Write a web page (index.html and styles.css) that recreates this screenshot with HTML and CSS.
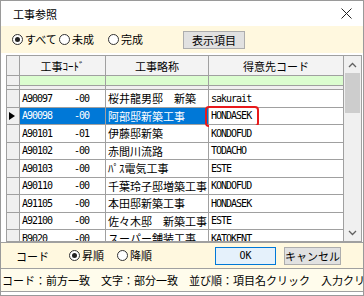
FILE: index.html
```html
<!DOCTYPE html>
<html lang="ja">
<head>
    <meta charset="UTF-8">
    <title>工事参照</title>
    <link rel="stylesheet" href="styles.css">
</head>
<body>

<div class="window">
    <div class="titlebar">
        <span class="title">工事参照</span>
        <svg class="close" width="11" height="11" viewBox="0 0 11 11">
            <path d="M0.5 0.5L10.5 10.5M10.5 0.5L0.5 10.5" stroke="#222" stroke-width="1"/>
        </svg>
    </div>

    <div class="toolbar">
        <span class="radio r-all"><span class="dot on"></span>すべて</span>
        <span class="radio r-mi"><span class="dot"></span>未成</span>
        <span class="radio r-kan"><span class="dot"></span>完成</span>
        <span class="btn btn-cols">表示項目</span>
    </div>

    <div class="grid-area">
        <div class="grid">
            <div class="row head">
                <div class="rh"></div>
                <div class="c">工事ｺｰﾄﾞ</div>
                <div class="c">工事略称</div>
                <div class="c">得意先コード</div>
            </div>
            <div class="row filter">
                <div class="rh"></div><div class="c"></div><div class="c"></div><div class="c"></div>
            </div>
            <div class="row sep">
                <div class="rh"></div><div class="c"></div><div class="c"></div><div class="c"></div>
            </div>

            <div class="row data">
                <div class="rh"></div>
                <div class="c code"><span class="no">A90097</span><span class="br">-00</span></div>
                <div class="c name">桜井龍男邸　新築</div>
                <div class="c code">sakurait</div>
            </div>
            <div class="row data selected">
                <div class="rh"><span class="mark"></span></div>
                <div class="c code hi"><span class="no">A90098</span><span class="br">-00</span></div>
                <div class="c name hi">阿部邸新築工事</div>
                <div class="c code">HONDASEK<span class="ring"></span></div>
            </div>
            <div class="row data">
                <div class="rh"></div>
                <div class="c code"><span class="no">A90101</span><span class="br">-01</span></div>
                <div class="c name">伊藤邸新築</div>
                <div class="c code">KONDOFUD</div>
            </div>
            <div class="row data">
                <div class="rh"></div>
                <div class="c code"><span class="no">A90102</span><span class="br">-00</span></div>
                <div class="c name">赤間川流路</div>
                <div class="c code">TODACHO</div>
            </div>
            <div class="row data">
                <div class="rh"></div>
                <div class="c code"><span class="no">A90103</span><span class="br">-00</span></div>
                <div class="c name">ﾊﾟｽ電気工事</div>
                <div class="c code">ESTE</div>
            </div>
            <div class="row data">
                <div class="rh"></div>
                <div class="c code"><span class="no">A90110</span><span class="br">-00</span></div>
                <div class="c name">千葉玲子邸増築工事</div>
                <div class="c code">KONDOFUD</div>
            </div>
            <div class="row data">
                <div class="rh"></div>
                <div class="c code"><span class="no">A91105</span><span class="br">-00</span></div>
                <div class="c name">本田邸新築工事</div>
                <div class="c code">HONDASEK</div>
            </div>
            <div class="row data">
                <div class="rh"></div>
                <div class="c code"><span class="no">A92100</span><span class="br">-00</span></div>
                <div class="c name">佐々木邸　新築工事</div>
                <div class="c code">ESTE</div>
            </div>
            <div class="row data">
                <div class="rh"></div>
                <div class="c code"><span class="no">B9020</span><span class="br">-00</span></div>
                <div class="c name">スーパー舗装工事</div>
                <div class="c code">KATOKENT</div>
            </div>
        </div>

        <div class="vscroll">
            <div class="arrow">
                <svg width="9" height="6" viewBox="0 0 9 6"><path d="M1 5L4.5 1.5L8 5" fill="none" stroke="#606060" stroke-width="1.3"/></svg>
            </div>
            <div class="track"><div class="thumb"></div></div>
            <div class="arrow">
                <svg width="9" height="6" viewBox="0 0 9 6"><path d="M1 1L4.5 4.5L8 1" fill="none" stroke="#606060" stroke-width="1.3"/></svg>
            </div>
        </div>
    </div>

    <div class="bottom">
        <span class="sort-label">コード</span>
        <span class="radio r-asc"><span class="dot on"></span>昇順</span>
        <span class="radio r-desc"><span class="dot"></span>降順</span>
        <span class="btn btn-ok">OK</span>
        <span class="btn btn-cancel">キャンセル</span>
    </div>

    <div class="status">コード：前方一致　文字：部分一致　並び順：項目名クリック　入力クリア</div>
</div>

</body>
</html>
```

FILE: styles.css
```css
body {
    margin: 0;
    font-family: "Noto Sans CJK JP", sans-serif;
    font-size: 11px;
    color: #000;
}

.window {
    width: 364px;
    height: 296px;
    box-sizing: border-box;
    border: 1px solid #9a9a9a;
    background: #fff;
    display: flex;
    flex-direction: column;
    overflow: hidden;
}

/* title */
.titlebar {
    height: 25px;
    display: flex;
    align-items: center;
    justify-content: space-between;
    padding: 0 11px 0 12px;
    background: #fff;
}

.title {
    font-size: 11px;
}

/* radio + buttons */
.toolbar {
    height: 27px;
    background: #fff8df;
    display: flex;
    align-items: center;
    padding-left: 11px;
}

.radio {
    display: inline-flex;
    align-items: center;
    gap: 2px;
    line-height: 1;
}

.dot {
    width: 9px;
    height: 9px;
    border: 1px solid #333;
    border-radius: 50%;
    background: #fff;
    position: relative;
}

.dot.on::after {
    content: '';
    position: absolute;
    left: 2px;
    top: 2px;
    width: 5px;
    height: 5px;
    border-radius: 50%;
    background: #222;
}

.r-all { width: 47px; }
.r-mi { width: 49px; }
.r-kan { width: 75px; }

.btn {
    display: inline-flex;
    align-items: center;
    justify-content: center;
    box-sizing: border-box;
    height: 18px;
    background: #e1e1e1;
    border: 1px solid #adadad;
    font-size: 11px;
}

.btn-cols {
    width: 62px;
    margin-top: 1px;
}

/* grid */
.grid-area {
    display: flex;
    margin: 2px 0 0 5px;
    width: 356px;
    height: 187px;
    box-sizing: border-box;
    border: 1px solid #a0a0a0;
    overflow: hidden;
}

.grid {
    width: 337px;
    overflow: hidden;
}

.row {
    display: grid;
    grid-template-columns: 13px 86px 103px 135px;
}

.rh,
.c {
    box-sizing: border-box;
    border-right: 1px solid #a0a0a0;
    border-bottom: 1px solid #a0a0a0;
    overflow: hidden;
    white-space: nowrap;
}

.rh {
    background: #f0f0f0;
    position: relative;
}

.head {
    height: 20px;
}

.head .c {
    background: #f3f3f3;
    display: flex;
    align-items: center;
    justify-content: center;
}

.filter {
    height: 10px;
}

.filter .c {
    background: #dbfdcf;
}

.sep {
    height: 4px;
}

.sep .c {
    background: #f0f0f0;
}

.data {
    height: 17.5px;
}

.data .c {
    display: flex;
    align-items: center;
    padding-left: 2px;
    background: #fff;
}

.data .code {
    font-family: "DejaVu Sans Mono", monospace;
    font-size: 10px;
    letter-spacing: -1px;
    position: relative;
    overflow: visible;
}

.no {
    width: 52px;
}

.data .hi {
    background: #0078d7;
    color: #fff;
}

.mark {
    position: absolute;
    left: 2px;
    top: 4px;
    border-left: 6px solid #000;
    border-top: 4.5px solid transparent;
    border-bottom: 4.5px solid transparent;
}

/* red note ring over the customer code */
.ring {
    position: absolute;
    left: -4px;
    top: -2px;
    width: 54px;
    height: 21px;
    box-sizing: border-box;
    border: 2px solid #e8191b;
    border-radius: 4px;
}

/* scrollbar */
.vscroll {
    width: 17px;
    background: #f0f0f0;
    display: flex;
    flex-direction: column;
}

.arrow {
    height: 17px;
    display: flex;
    align-items: center;
    justify-content: center;
}

.track {
    flex: 1;
}

.thumb {
    margin: 0 1px;
    height: 40px;
    background: #cdcdcd;
}

/* sort + ok */
.bottom {
    height: 25px;
    background: #fff8df;
    border-top: 1px solid #a0a0a0;
    display: flex;
    align-items: center;
    padding-left: 15px;
}

.sort-label { width: 53px; }
.r-asc { width: 48px; }
.r-desc { width: 98px; }

.btn-ok {
    width: 61px;
    height: 18px;
    background: #e5f1fb;
    border-color: #0078d7;
    font-family: "DejaVu Sans Mono", monospace;
    font-size: 10px;
}

.btn-cancel {
    width: 57px;
    height: 18px;
    margin-left: 8px;
}

.status {
    height: 24px;
    box-sizing: border-box;
    border-top: 1px solid #a0a0a0;
    border-bottom: 1px solid #a0a0a0;
    background: #fffcec;
    display: flex;
    align-items: center;
    white-space: nowrap;
    overflow: hidden;
    padding-left: 1px;
}
```
